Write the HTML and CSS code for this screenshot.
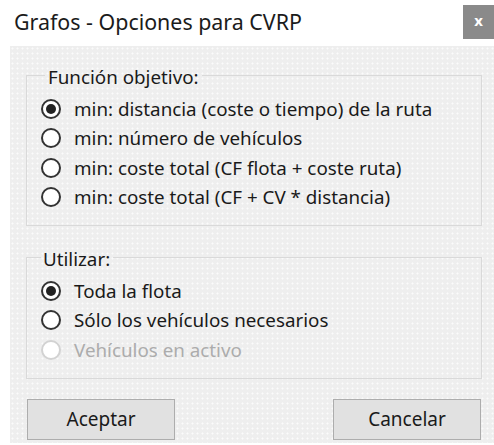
FILE: index.html
```html
<!DOCTYPE html>
<html lang="es">
<head>
<meta charset="utf-8">
<title>Grafos - Opciones para CVRP</title>
<link rel="stylesheet" href="styles.css">
</head>
<body>
<div class="window">
  <div class="titlebar">
    <span class="title">Grafos - Opciones para CVRP</span>
    <button class="close" type="button" aria-label="Cerrar">x</button>
  </div>
  <div class="client">
    <fieldset class="group">
      <legend class="legend">Función objetivo:</legend>
      <div class="options">
        <label class="option"><span class="radio checked"></span>min: distancia (coste o tiempo) de la ruta</label>
        <label class="option"><span class="radio"></span>min: número de vehículos</label>
        <label class="option"><span class="radio"></span>min: coste total (CF flota + coste ruta)</label>
        <label class="option"><span class="radio"></span>min: coste total (CF + CV * distancia)</label>
      </div>
    </fieldset>
    <fieldset class="group group-second">
      <legend class="legend">Utilizar:</legend>
      <div class="options">
        <label class="option"><span class="radio checked"></span>Toda la flota</label>
        <label class="option"><span class="radio"></span>Sólo los vehículos necesarios</label>
        <label class="option disabled"><span class="radio"></span>Vehículos en activo</label>
      </div>
    </fieldset>
    <div class="actions">
      <button class="btn" type="button">Aceptar</button>
      <button class="btn" type="button">Cancelar</button>
    </div>
  </div>
</div>
</body>
</html>
```

FILE: styles.css
```css
* {
  box-sizing: border-box;
}

html, body {
  margin: 0;
  padding: 0;
  background: #ffffff;
}

body {
  width: 494px;
  height: 445px;
  overflow: hidden;
  font-family: "Noto Sans", "Open Sans", sans-serif;
  font-size: 18.8px;
  color: #1a1a1a;
}

.window {
  display: flex;
  flex-direction: column;
  height: 445px;
}

.titlebar {
  height: 46px;
  display: flex;
  justify-content: space-between;
  align-items: flex-start;
  background: #ffffff;
}

.title {
  font-size: 21.4px;
  line-height: 26px;
  margin-top: 9px;
  padding-left: 14px;
  color: #1b1b1b;
}

.close {
  margin: 5px 0 0 0;
  width: 31px;
  height: 34px;
  border: 0;
  padding: 0 0 3px 0;
  background: #8a8a8a;
  color: #ffffff;
  font-family: "Noto Sans", sans-serif;
  font-size: 15px;
  font-weight: bold;
  line-height: 1;
}

/* dialog surface with the fine dotted texture */
.client {
  margin-left: 10px;
  height: 397px;
  padding: 15px 12px 0 16px;
  background-color: #eeeeee;
  background-image: radial-gradient(circle, #fbfbfb 0.8px, transparent 1.2px);
  background-size: 5px 5px;
  display: flex;
  flex-direction: column;
}

.group {
  margin: 0;
  padding: 0 0 13px 14px;
  border: 1px solid #d9d9d9;
  min-width: 0;
}

.group-second {
  margin-top: 17px;
}

/* legend text sits a little below the frame line */
.legend {
  padding: 4px 3px 0 3px;
  margin-left: 4px;
  line-height: 24px;
  color: #1a1a1a;
}

.group-second .legend {
  margin-left: 0;
  padding-left: 2px;
}

.options {
  display: flex;
  flex-direction: column;
  padding-top: 5px;
}

.option {
  display: flex;
  align-items: center;
  gap: 13px;
  height: 29.5px;
  white-space: nowrap;
}

.radio {
  flex: none;
  width: 20px;
  height: 20px;
  border: 2px solid #333333;
  border-radius: 50%;
  background: #ffffff;
  display: flex;
  align-items: center;
  justify-content: center;
}

.radio.checked::after {
  content: "";
  width: 10px;
  height: 10px;
  border-radius: 50%;
  background: #222222;
}

.option.disabled {
  color: #acacac;
}

.option.disabled .radio {
  border-color: #d2d2d2;
}

.actions {
  display: flex;
  justify-content: space-between;
  margin-top: 20px;
  padding-left: 1px;
  padding-right: 1px;
}

.btn {
  width: 148px;
  height: 41px;
  border: 1px solid #adadad;
  background: #e1e1e1;
  font-family: "Noto Sans", "Open Sans", sans-serif;
  font-size: 19px;
  color: #1a1a1a;
  padding: 0;
}
```
